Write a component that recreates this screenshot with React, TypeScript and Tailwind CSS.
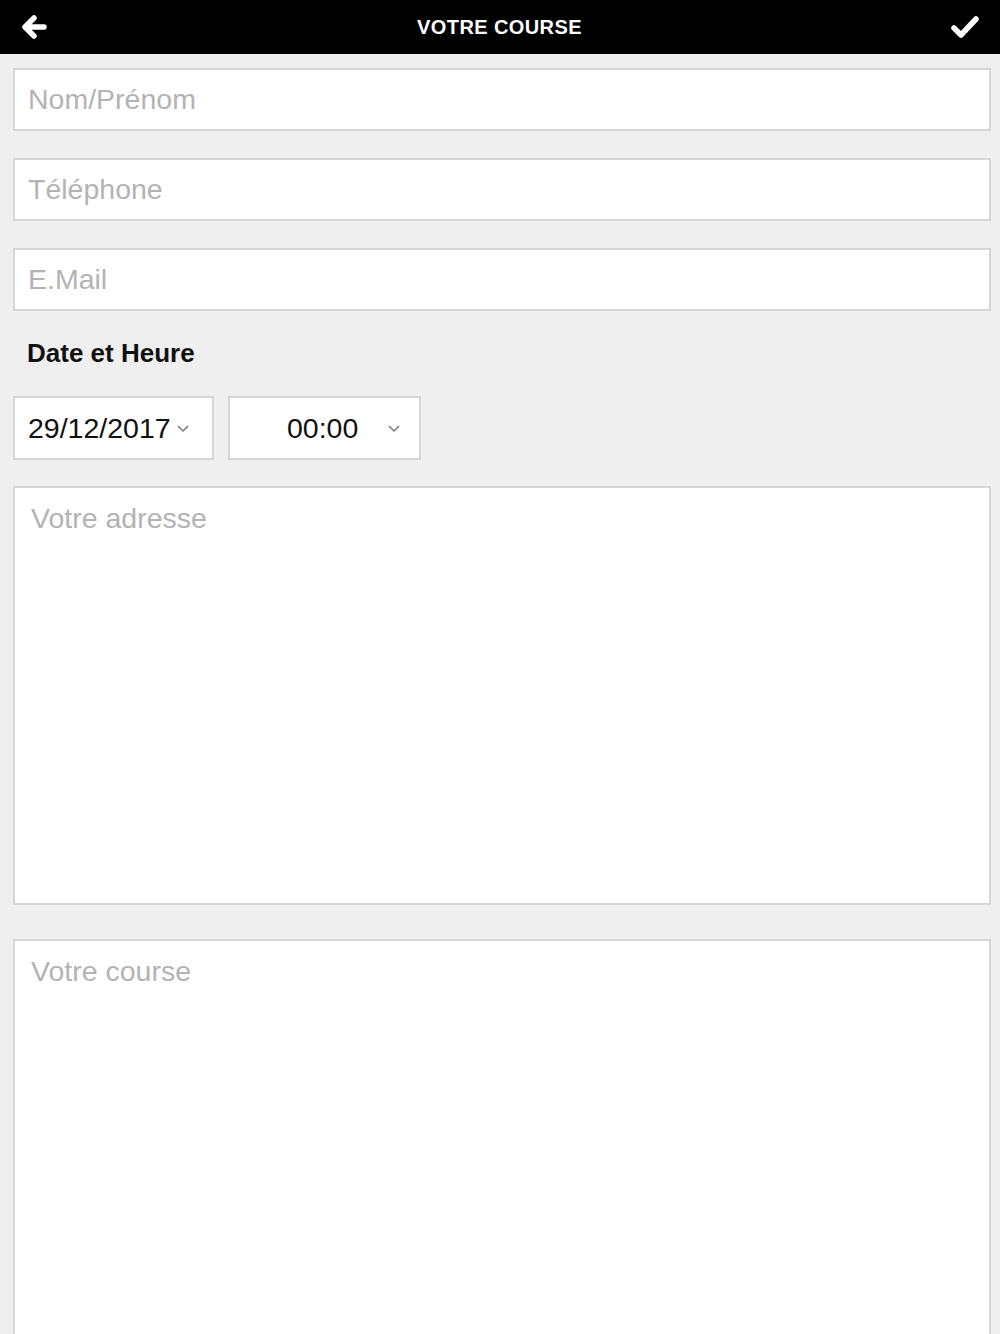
export default function App() {
  return (
    <main className="min-h-screen bg-[#efefef] font-['Liberation_Sans',Arial,sans-serif] overflow-hidden h-[1334px]">
      {/* barre du haut */}
      <header className="h-[54px] bg-black flex items-center justify-between px-[18px]">
        <svg width="30" height="30" viewBox="0 0 30 30" className="ml-[1px]">
          <path d="M25 15 H7 M15 6 L6 15 L15 24" fill="none" stroke="white" strokeWidth="5.5" strokeLinecap="round" strokeLinejoin="round" />
        </svg>
        <h1 className="text-white font-bold text-[20px] tracking-[0.4px]">VOTRE COURSE</h1>
        <svg width="30" height="30" viewBox="0 0 30 30" className="mr-[2px]">
          <path d="M4 16 L11 23 L26 7" fill="none" stroke="white" strokeWidth="5.5" strokeLinecap="round" strokeLinejoin="round" />
        </svg>
      </header>

      <div className="pl-[13px] pr-[9px] pt-[14px]">
        {/* champs texte */}
        <div className="flex flex-col gap-[27px]">
          {["Nom/Prénom", "Téléphone", "E.Mail"].map((p) => (
            <div key={p} className="h-[63px] bg-white border-2 border-[#d6d6d6] flex items-center px-[13px]">
              <span className="text-[28.5px] text-[#b3b3b3]">{p}</span>
            </div>
          ))}
        </div>

        {/* date et heure */}
        <h2 className="mt-[27px] ml-[14px] text-[26px] leading-[30px] font-bold text-[#111]">Date et Heure</h2>
        <div className="mt-[28px] flex gap-[14px]">
          <div className="w-[201px] h-[64px] bg-white border-2 border-[#d6d6d6] flex items-center pl-[13px]">
            <span className="text-[28.5px] text-[#111]">29/12/2017</span>
            <svg width="14" height="10" viewBox="0 0 14 10" className="ml-[5px]">
              <path d="M2 3 L7 8 L12 3" fill="none" stroke="#777" strokeWidth="1.5" />
            </svg>
          </div>
          <div className="w-[193px] h-[64px] bg-white border-2 border-[#d6d6d6] flex items-center pl-[57px]">
            <span className="text-[28.5px] text-[#111]">00:00</span>
            <svg width="14" height="10" viewBox="0 0 14 10" className="ml-[29px]">
              <path d="M2 3 L7 8 L12 3" fill="none" stroke="#777" strokeWidth="1.5" />
            </svg>
          </div>
        </div>

        {/* zones de texte */}
        <div className="mt-[26px] h-[419px] bg-white border-2 border-[#d6d6d6] px-[16px] pt-[13px]">
          <span className="block text-[28.5px] leading-[34px] text-[#b3b3b3]">Votre adresse</span>
        </div>
        <div className="mt-[34px] h-[420px] bg-white border-2 border-[#d6d6d6] px-[16px] pt-[13px]">
          <span className="block text-[28.5px] leading-[34px] text-[#b3b3b3]">Votre course</span>
        </div>
      </div>
    </main>
  );
}
